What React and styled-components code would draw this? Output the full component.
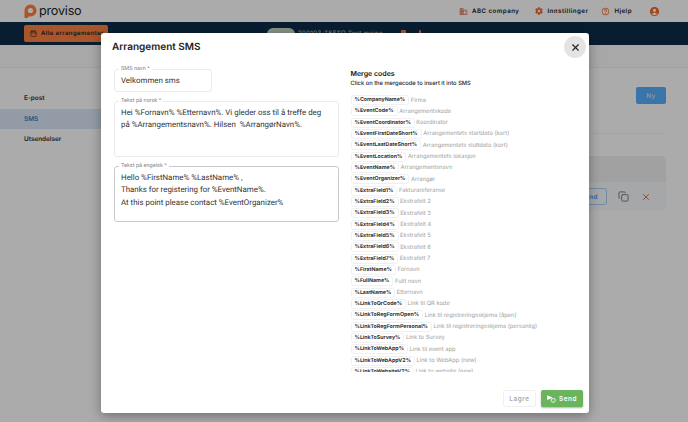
import React from "react";
import styled, { createGlobalStyle } from "styled-components";
import { Calendar, X, Copy } from "lucide-react";
import { FaCog } from "react-icons/fa";
import { MdBusiness, MdHelpOutline, MdAccountCircle } from "react-icons/md";

const GlobalStyle = createGlobalStyle`
  html, body {
    margin: 0;
    width: 688px;
    height: 422px;
    overflow: hidden;
    font-family: Inter, "Liberation Sans", sans-serif;
    text-rendering: geometricPrecision;
    background: #fff;
  }
`;

const Page = styled.div`
  position: relative;
  width: 688px;
  height: 422px;
  overflow: hidden;
  display: flex;
  flex-direction: column;
`;

const TopBar = styled.header`
  height: 22px;
  box-sizing: border-box;
  display: flex;
  align-items: center;
  padding: 0 28px 0 24px;
  background: #fff;
`;

const Logo = styled.div`
  display: flex;
  align-items: center;
  gap: 2px;
  font-size: 12.6px;
  letter-spacing: -0.2px;
  color: #222;
  flex: 1;
`;

const TopLink = styled.div`
  display: flex;
  align-items: center;
  gap: 4px;
  font-size: 6.2px;
  font-weight: 600;
  letter-spacing: 0.45px;
  color: #222;
  margin-left: ${({ $gap }) => $gap}px;
  svg { color: ${({ $icon }) => $icon}; }
`;

const NavBar = styled.div`
  height: 23px;
  box-sizing: border-box;
  display: flex;
  align-items: center;
  padding-left: 24px;
  background: #0c2d48;
`;

const OrangeButton = styled.div`
  width: 84px;
  height: 17px;
  display: flex;
  align-items: center;
  gap: 4px;
  padding-left: 6px;
  box-sizing: border-box;
  border-radius: 2px;
  background: #ff7f3f;
  color: #222;
  font-size: 6px;
  font-weight: 600;
  letter-spacing: 0.4px;
  white-space: nowrap;
`;

const EventPill = styled.div`
  margin-left: 159px;
  width: 28px;
  height: 12px;
  border-radius: 6px;
  background: #c8d8c8;
`;

const EventName = styled.div`
  margin-left: 3px;
  font-size: 6px;
  letter-spacing: 0.4px;
  color: #ddd;
  white-space: nowrap;
`;

const EventMark = styled.div`
  margin-left: ${({ $gap }) => $gap}px;
  width: ${({ $width }) => $width}px;
  height: 8px;
  border-radius: 1px;
  background: #ff7f3f;
`;

const SubBar = styled.div`
  height: 23px;
  box-sizing: border-box;
  background: #fbfbfb;
  border-bottom: 1px solid #f0f0f0;
`;

const Body = styled.div`
  flex: 1;
  display: flex;
`;

const Side = styled.nav`
  width: 101px;
  padding-top: 20px;
`;

const SideItem = styled.div`
  height: 20.5px;
  display: flex;
  align-items: center;
  padding-left: 24px;
  font-size: 6.4px;
  font-weight: 600;
  color: ${({ $active }) => ($active ? "#3a80c9" : "#333")};
  background: ${({ $active }) => ($active ? "#dbe9f8" : "transparent")};
`;

const Content = styled.main`
  flex: 1;
  display: flex;
  flex-direction: column;
  align-items: flex-end;
  padding: 19px 22px 0 0;
`;

const BlueButton = styled.div`
  width: 30px;
  height: 17px;
  display: flex;
  align-items: center;
  justify-content: center;
  border-radius: 2px;
  background: #56aeff;
  color: #ddd;
  font-size: 6.4px;
  font-weight: 600;
  letter-spacing: 0.4px;
`;

const Divider = styled.div`
  width: 100%;
  margin-top: 29px;
  border-top: 1px solid #f4f4f4;
`;

const Card = styled.div`
  margin-top: 22px;
  width: 100%;
  height: 55px;
  border-radius: 5px;
  background: #f7f9fb;
  overflow: hidden;
`;

const CardHead = styled.div`
  height: 26px;
  background: #f0f0f0;
`;

const CardActions = styled.div`
  height: 29px;
  display: flex;
  align-items: center;
  justify-content: flex-end;
  padding-right: 15px;
  color: #777;
`;

const OutlineButton = styled.div`
  width: 40px;
  height: 17px;
  box-sizing: border-box;
  display: flex;
  align-items: center;
  justify-content: flex-end;
  padding-right: 8px;
  margin-right: 11px;
  border: 1px solid #a9cdf2;
  border-radius: 3px;
  color: #4a98e8;
  font-size: 6.4px;
  font-weight: 600;
  letter-spacing: 0.4px;
`;

const CopyButton = styled.div`
  display: flex;
  margin-right: 12px;
`;

const Backdrop = styled.div`
  position: absolute;
  inset: 0;
  background: rgba(0, 0, 0, 0.33);
`;

const Modal = styled.section`
  position: absolute;
  left: 101px;
  top: 33px;
  width: 488px;
  height: 380px;
  box-sizing: border-box;
  border-radius: 3px;
  background: #fff;
  box-shadow: 0 3px 12px rgba(0, 0, 0, 0.35);
  display: flex;
  flex-direction: column;
`;

const ModalHead = styled.div`
  height: 36px;
  flex: none;
  box-sizing: border-box;
  display: flex;
  align-items: flex-start;
  justify-content: space-between;
  padding: 3px 3px 0 11px;
`;

const Title = styled.h2`
  margin: 0;
  font-size: 10px;
  line-height: 22px;
  font-weight: 600;
  color: #222;
`;

const CloseButton = styled.button`
  width: 22px;
  height: 22px;
  padding: 0;
  border: 0;
  border-radius: 50%;
  background: #e4e4e4;
  color: #222;
  display: flex;
  align-items: center;
  justify-content: center;
`;

const Columns = styled.div`
  flex: 1;
  min-height: 0;
  display: grid;
  grid-template-columns: 225px 1fr;
  column-gap: 11.5px;
  padding: 0 13px;
`;

const Fields = styled.div`
  display: flex;
  flex-direction: column;
  gap: 9px;
`;

const Field = styled.div`
  position: relative;
  box-sizing: border-box;
  width: ${({ $width }) => $width}px;
  height: ${({ $height }) => $height}px;
  padding: ${({ $pad }) => $pad}px 6px 0;
  border: 1px solid ${({ $dark }) => ($dark ? "#c9c9c9" : "#ebebeb")};
  border-radius: 3px;
  font-family: Roboto, "Liberation Sans", sans-serif;
  font-size: 7.9px;
  line-height: 12.5px;
  color: #333;
  white-space: pre;
`;

const Legend = styled.label`
  position: absolute;
  left: 4px;
  top: -4px;
  padding: 0 2px;
  background: #fff;
  font-size: 5.6px;
  line-height: 7px;
  color: #888;
`;

const Merge = styled.div`
  display: flex;
  flex-direction: column;
  min-height: 0;
`;

const MergeTitle = styled.h3`
  margin: 0;
  font-size: 7px;
  line-height: 10px;
  font-weight: 600;
  color: #111;
`;

const MergeHint = styled.p`
  margin: 0 0 7px;
  font-size: 5.75px;
  line-height: 9px;
  font-weight: 500;
  color: #222;
`;

const CodeList = styled.div`
  flex: 1;
  min-height: 0;
  overflow: hidden;
  display: flex;
  flex-direction: column;
  gap: 1.33px;
`;

const CodeRow = styled.div`
  display: flex;
  align-items: center;
  gap: 1.5px;
  height: 10px;
  flex: none;
`;

const Chip = styled.span`
  box-sizing: border-box;
  height: 10px;
  padding: 0 3px;
  display: flex;
  align-items: center;
  border: 0.5px solid #f0f0f0;
  border-radius: 2.5px;
  font-size: 5.3px;
  font-weight: 700;
  color: #333;
  white-space: nowrap;
`;

const CodeText = styled.span`
  font-size: 5.75px;
  color: #a0a0a0;
  white-space: nowrap;
`;

const Footer = styled.div`
  height: 41px;
  flex: none;
  box-sizing: border-box;
  display: flex;
  align-items: flex-start;
  justify-content: flex-end;
  gap: 5px;
  padding: 18px 6px 0 0;
`;

const FootButton = styled.button`
  box-sizing: border-box;
  width: ${({ $width }) => $width}px;
  height: 17px;
  padding: 0;
  border: ${({ $primary }) => ($primary ? "0" : "1px solid #f0f0f0")};
  border-radius: 2px;
  display: flex;
  align-items: center;
  justify-content: center;
  gap: 3px;
  background: ${({ $primary }) => ($primary ? "#69b45c" : "#fff")};
  color: ${({ $primary }) => ($primary ? "#fff" : "#aaa")};
  box-shadow: ${({ $primary }) => ($primary ? "0 1px 2px rgba(0,0,0,.3)" : "none")};
  font-family: inherit;
  font-size: 6.4px;
  font-weight: 600;
  letter-spacing: 0.6px;
`;

const codes = [
  ["%CompanyName%", "Firma"],
  ["%EventCode%", "Arrangementskode"],
  ["%EventCoordinator%", "Koordinator"],
  ["%EventFirstDateShort%", "Arrangementets startdato (kort)"],
  ["%EventLastDateShort%", "Arrangementets sluttdato (kort)"],
  ["%EventLocation%", "Arrangementets lokasjon"],
  ["%EventName%", "Arrangementsnavn"],
  ["%EventOrganizer%", "Arrangør"],
  ["%ExtraField1%", "Fakturareferanse"],
  ["%ExtraField2%", "Ekstrafelt 2"],
  ["%ExtraField3%", "Ekstrafelt 3"],
  ["%ExtraField4%", "Ekstrafelt 4"],
  ["%ExtraField5%", "Ekstrafelt 5"],
  ["%ExtraField6%", "Ekstrafelt 6"],
  ["%ExtraField7%", "Ekstrafelt 7"],
  ["%FirstName%", "Fornavn"],
  ["%FullName%", "Fullt navn"],
  ["%LastName%", "Etternavn"],
  ["%LinkToQrCode%", "Link til QR kode"],
  ["%LinkToRegFormOpen%", "Link til registreringsskjema (åpen)"],
  ["%LinkToRegFormPersonal%", "Link til registreringsskjema (personlig)"],
  ["%LinkToSurvey%", "Link to Survey"],
  ["%LinkToWebApp%", "Link til event app"],
  ["%LinkToWebAppV2%", "Link to WebApp (new)"],
  ["%LinkToWebsiteV2%", "Link to website (new)"],
];

function LogoMark() {
  return (
    <svg width="13" height="14" viewBox="0 0 13 14">
      <path d="M6.5 0.5a6 6 0 0 1 0 12H4v1.5H1.2A.7.7 0 0 1 .5 13.3V6.5a6 6 0 0 1 6-6z" fill="#ff7f3f" />
      <circle cx="6.5" cy="6.5" r="2.6" fill="#fff" />
    </svg>
  );
}

function SendIcon() {
  return (
    <svg width="9" height="8" viewBox="0 0 10 9" fill="none" stroke="#fff" strokeWidth="1">
      <path d="M0.5 1l5 2-5 2z" fill="#fff" />
      <circle cx="7" cy="6" r="2.2" />
    </svg>
  );
}

export default function App() {
  return (
    <Page>
      <GlobalStyle />
      <TopBar>
        <Logo>
          <LogoMark />
          proviso
        </Logo>
        <TopLink $icon="#d8765a" $gap={0}>
          <MdBusiness size={9} />
          ABC company
        </TopLink>
        <TopLink $icon="#f26a2a" $gap={16}>
          <FaCog size={8} />
          Innstillinger
        </TopLink>
        <TopLink $icon="#f26a2a" $gap={13}>
          <MdHelpOutline size={9} />
          Hjelp
        </TopLink>
        <TopLink $icon="#f26a2a" $gap={17}>
          <MdAccountCircle size={11} />
        </TopLink>
      </TopBar>
      <NavBar>
        <OrangeButton>
          <Calendar size={7} />
          Alle arrangementer
        </OrangeButton>
        <EventPill />
        <EventName>200103-TESTO Test maine</EventName>
        <EventMark $gap={18} $width={5} />
        <EventMark $gap={13} $width={2} />
      </NavBar>
      <SubBar />
      <Body>
        <Side>
          <SideItem>E-post</SideItem>
          <SideItem $active>SMS</SideItem>
          <SideItem>Utsendelser</SideItem>
        </Side>
        <Content>
          <BlueButton>Ny</BlueButton>
          <Divider />
          <Card>
            <CardHead />
            <CardActions>
              <OutlineButton>Send</OutlineButton>
              <CopyButton>
                <Copy size={11} />
              </CopyButton>
              <X size={10} color="#e0552a" />
            </CardActions>
          </Card>
        </Content>
      </Body>
      <Backdrop />
      <Modal>
        <ModalHead>
          <Title>Arrangement SMS</Title>
          <CloseButton>
            <X size={11} strokeWidth={2.4} />
          </CloseButton>
        </ModalHead>
        <Columns>
          <Fields>
            <Field $width={98} $height={23} $pad={4.5}>
              <Legend>SMS navn *</Legend>
              Velkommen sms
            </Field>
            <Field $width={225} $height={56} $pad={4.5}>
              <Legend>Tekst på norsk *</Legend>
              {"Hei %Fornavn% %Etternavn%. Vi gleder oss til å treffe deg\npå %Arrangementsnavn%. Hilsen  %ArrangørNavn%."}
            </Field>
            <Field $width={225} $height={56} $pad={4.5} $dark>
              <Legend>Tekst på engelsk *</Legend>
              {"Hello %FirstName% %LastName% ,\nThanks for registering for %EventName%.\nAt this point please contact %EventOrganizer%"}
            </Field>
          </Fields>
          <Merge>
            <MergeTitle>Merge codes</MergeTitle>
            <MergeHint>Click on the mergecode to insert it into SMS</MergeHint>
            <CodeList>
              {codes.map(([code, label]) => (
                <CodeRow key={code}>
                  <Chip>{code}</Chip>
                  <CodeText>{label}</CodeText>
                </CodeRow>
              ))}
            </CodeList>
          </Merge>
        </Columns>
        <Footer>
          <FootButton $width={33}>Lagre</FootButton>
          <FootButton $width={42} $primary>
            <SendIcon />
            Send
          </FootButton>
        </Footer>
      </Modal>
    </Page>
  );
}
